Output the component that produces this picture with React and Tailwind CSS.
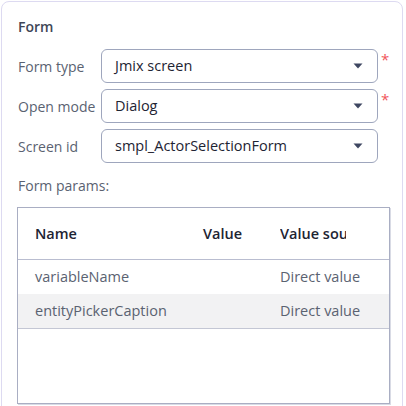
import React from 'react';

const Caret = () => (
    <svg width="10" height="6" viewBox="0 0 10 6" className="shrink-0">
        <path d="M0.5 0.5 L9.5 0.5 L5 5.5 Z" fill="#3e4761" />
    </svg>
);

const SelectRow = ({ label, value, required }) => (
    <div className="flex items-center h-[34px]">
        <div className="w-[84px] pl-px text-[14px] text-[#5a6271] whitespace-nowrap">{label}</div>
        <div className="w-[277px] h-[34px] border border-[#9ea6bd] rounded-[6px] flex items-center pl-[13px] pr-[14px]">
            <span className="flex-1 text-[14.5px] text-[#1e2433] whitespace-nowrap">{value}</span>
            <Caret />
        </div>
        {required && <span className="self-start mt-[3px] ml-[3px] text-[15px] text-[#f0565a] leading-none">*</span>}
    </div>
);

const rows = [
    { name: 'variableName', value: '', source: 'Direct value' },
    { name: 'entityPickerCaption', value: '', source: 'Direct value', shaded: true },
];

const App = () => {
    return (
        <div className="w-[406px] h-[406px] overflow-hidden bg-white pl-px pt-px pr-[3px]" style={{ fontFamily: '"Open Sans", sans-serif' }}>
            <div className="h-[420px] border border-[#dddaf1] rounded-t-lg pl-[15px] pt-[15px]">
                <div className="h-5 leading-5 pl-px text-[14px] font-semibold text-[#3f4656]">Form</div>

                <div className="mt-[12px] flex flex-col gap-[6px]">
                    <SelectRow label="Form type" value="Jmix screen" required />
                    <SelectRow label="Open mode" value="Dialog" required />
                    <SelectRow label="Screen id" value="smpl_ActorSelectionForm" />
                </div>

                <div className="mt-[13px] h-5 leading-5 pl-px text-[14px] text-[#5a6271]">Form params:</div>

                <div className="mt-[11px] w-[373px] h-[197px] border border-[#a9aec3] shadow-[1px_1px_0_#d9dbe5]">
                    <div className="flex h-[52px] items-center border-b border-[#b9bdd0] text-[14.5px] font-semibold text-[#1e2433]">
                        <div className="w-[168px] pl-[17px]">Name</div>
                        <div className="w-[77px] pl-[17px]">Value</div>
                        <div className="flex-1 pl-[17px]">
                            <div className="w-[66px] overflow-hidden whitespace-nowrap">Value source</div>
                        </div>
                    </div>
                    {rows.map((r, i) => (
                        <div
                            key={i}
                            className={`flex items-center text-[14.5px] text-[#5a6271] ${r.shaded ? 'bg-[#f2f2f3] h-[35px] border-b border-[#c4c7d4]' : 'h-[34px]'}`}
                        >
                            <div className="w-[168px] pl-[17px] whitespace-nowrap">{r.name}</div>
                            <div className="w-[77px] pl-[17px]">{r.value}</div>
                            <div className="flex-1 pl-[17px] whitespace-nowrap">{r.source}</div>
                        </div>
                    ))}
                </div>
            </div>
        </div>
    );
};

export default App;
